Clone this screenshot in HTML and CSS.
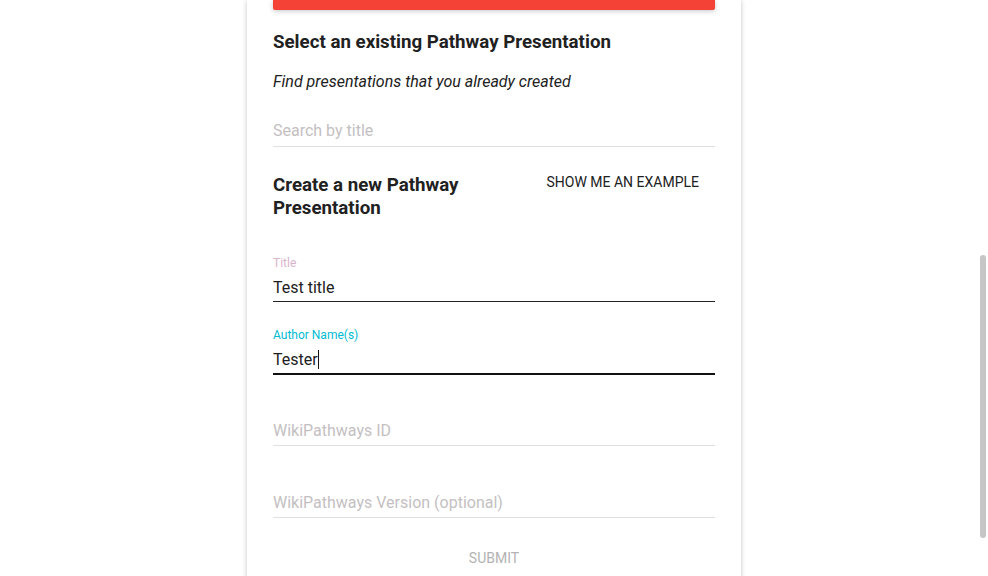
FILE: index.html
```html
<!DOCTYPE html>
<html lang="en">
<head>
<meta charset="utf-8">
<title>Pathway Presentation</title>
<link rel="stylesheet" href="styles.css">
</head>
<body>
<div class="card">
  <div class="redbar"></div>
  <h3 class="section-title">Select an existing Pathway Presentation</h3>
  <p class="hint-text">Find presentations that you already created</p>
  <div class="field field--compact">
    <div class="field-input placeholder">Search by title</div>
    <div class="underline"></div>
  </div>
  <div class="create-row">
    <h3 class="section-title section-title--flex">Create a new Pathway Presentation</h3>
    <button class="flat-btn" type="button">Show me an example</button>
  </div>
  <div class="field">
    <div class="field-label label-pink">Title</div>
    <div class="field-input">Test title</div>
    <div class="underline underline--dark"></div>
  </div>
  <div class="field">
    <div class="field-label label-cyan">Author Name(s)</div>
    <div class="field-input">Tester<span class="caret"></span></div>
    <div class="underline underline--focus"></div>
  </div>
  <div class="field field--hint">
    <div class="field-label"></div>
    <div class="field-input placeholder">WikiPathways ID</div>
    <div class="underline"></div>
  </div>
  <div class="field field--hint">
    <div class="field-label"></div>
    <div class="field-input placeholder">WikiPathways Version (optional)</div>
    <div class="underline"></div>
  </div>
  <div class="submit-row">
    <button class="flat-btn flat-btn--disabled" type="button">Submit</button>
  </div>
</div>
<div class="scroll-thumb"></div>
</body>
</html>
```
FILE: styles.css
```css
html, body {
  margin: 0;
  padding: 0;
  background: #ffffff;
  overflow: hidden;
  height: 576px;
}
body {
  font-family: Roboto, "Liberation Sans", sans-serif;
  color: #212121;
}
.card {
  width: 494px;
  box-sizing: border-box;
  margin: 0 auto;
  padding: 0 26px;
  min-height: 640px;
  background: #fff;
  box-shadow: 0 1px 6px rgba(0,0,0,0.12), 0 1px 4px rgba(0,0,0,0.12);
  display: flex;
  flex-direction: column;
}
.redbar {
  height: 10px;
  background: #f44336;
  border-radius: 0 0 2px 2px;
  box-shadow: 0 1px 6px rgba(0,0,0,0.12), 0 1px 4px rgba(0,0,0,0.12);
}
.section-title {
  margin: 21px 0 0;
  font-size: 18.72px;
  font-weight: 700;
  line-height: 23px;
  color: #212121;
}
.hint-text {
  margin: 18px 0 0;
  font-size: 16px;
  line-height: 20px;
  font-style: italic;
  color: #212121;
}
.field {
  height: 72px;
  padding-top: 18px;
  box-sizing: border-box;
  display: flex;
  flex-direction: column;
}
.field--compact {
  height: 48px;
  padding-top: 13px;
  margin-top: 14px;
}
.field-label {
  height: 16px;
  font-size: 12px;
  line-height: 16px;
  margin-bottom: 5px;
}
.field--hint .field-label { height: 15px; }
.field--hint .field-input { margin-bottom: 2px; }
.label-pink { color: #d9b3cb; }
.label-cyan { color: #00bcd4; }
.field-input {
  font-size: 16px;
  line-height: 24px;
  height: 24px;
  margin-bottom: 1px;
  color: #212121;
  white-space: nowrap;
}
.placeholder { color: #c4c0c2; }
.field--compact .field-input { margin-bottom: 3px; }
.underline {
  height: 1px;
  background: #e0e0e0;
}
.underline--dark { background: #222; }
.underline--focus { height: 2px; background: #111; }
.caret {
  display: inline-block;
  width: 1px;
  height: 19px;
  background: #111;
  vertical-align: -4px;
}
.create-row {
  display: flex;
  align-items: flex-start;
  margin-top: 18px;
  margin-bottom: 19px;
}
.section-title--flex {
  flex: 1;
  margin: 2px 0 -2px;
}
.flat-btn {
  border: 0;
  background: transparent;
  font-family: Roboto, "Liberation Sans", sans-serif;
  font-size: 14px;
  font-weight: 400;
  text-transform: uppercase;
  line-height: 20px;
  padding: 0 16px;
  color: #212121;
  cursor: pointer;
}
.submit-row {
  display: flex;
  justify-content: center;
  margin-top: 15px;
}
.flat-btn--disabled {
  line-height: 36px;
  color: #b3b3b3;
}
.scroll-thumb {
  position: fixed;
  right: 2px;
  top: 255px;
  width: 6px;
  height: 283px;
  border-radius: 3px;
  background: #c6c6c6;
}
```
